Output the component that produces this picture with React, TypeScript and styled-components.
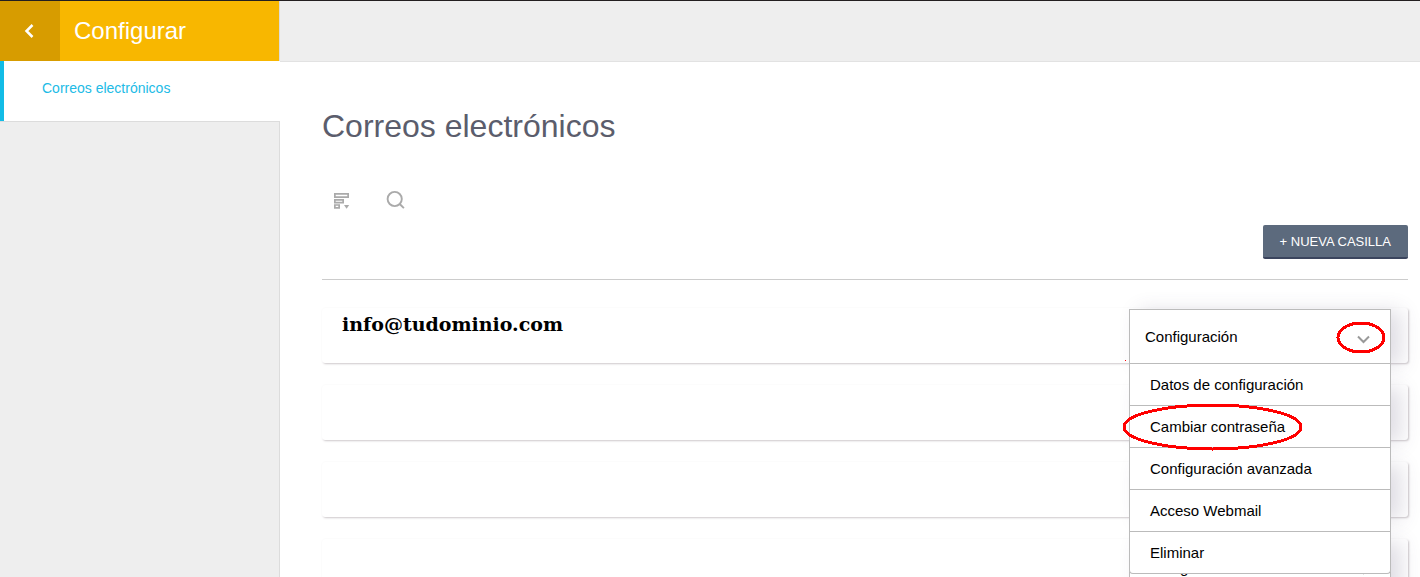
import React from 'react';
import styled, { createGlobalStyle, css } from 'styled-components';

const GlobalStyle = createGlobalStyle`
  *, *::before, *::after { box-sizing: border-box; }
  body {
    margin: 0;
    background: #fff;
    color: #000;
    font-family: "Liberation Sans", Arial, sans-serif;
    font-size: 15px;
  }
  button { font: inherit; color: inherit; cursor: pointer; }
`;

const Page = styled.div`
  display: flex;
  height: 100vh;
  overflow: hidden;
  border-top: 1px solid #231f20;
`;

const Sidebar = styled.aside`
  flex: 0 0 280px;
  background: #eee;
  border-right: 1px solid #dcdcdc;
`;

const SidebarHeader = styled.div`
  display: flex;
  height: 60px;
  background: #f8b700;
`;

const BackButton = styled.button`
  display: flex;
  align-items: center;
  justify-content: center;
  width: 60px;
  padding: 0 2px 0 0;
  border: 0;
  background: #d79c00;
`;

const SidebarTitle = styled.div`
  padding-left: 14px;
  color: #fff;
  font-size: 24px;
  line-height: 60px;
`;

const SidebarNav = styled.nav`
  margin-right: -1px;
  border-bottom: 1px solid #dcdcdc;
`;

const SidebarLink = styled.a`
  display: block;
  height: 60px;
  padding-left: 38px;
  border-left: 4px solid #12bce6;
  background: #fff;
  color: #21bbe6;
  font-size: 14px;
  line-height: 55px;
  text-decoration: none;
`;

const Main = styled.div`
  flex: 1;
  min-width: 0;
`;

const TopBar = styled.header`
  height: 61px;
  background: #eee;
  border-bottom: 1px solid #e2e2e2;
`;

const Content = styled.main`
  padding: 44px 12px 0 42px;
`;

const Heading = styled.h1`
  margin: 0;
  color: #5b5d6c;
  font-size: 32px;
  font-weight: 400;
  line-height: 40px;
`;

const Tools = styled.div`
  display: flex;
  gap: 30px;
  margin-top: 42px;
  padding-left: 8px;
`;

const IconButton = styled.button`
  width: 24px;
  height: 24px;
  padding: 0;
  border: 0;
  background: none;
  svg { display: block; }
`;

const Actions = styled.div`
  display: flex;
  justify-content: flex-end;
  padding: 13px 0 20px;
  border-bottom: 1px solid #ccc;
`;

const NewButton = styled.button`
  height: 34px;
  padding: 0 17px;
  border: 0;
  border-bottom: 2px solid #3b455e;
  border-radius: 2px;
  background: #5c6a7d;
  color: #fff;
  font-size: 13px;
`;

const MailboxList = styled.ul`
  display: flex;
  flex-direction: column;
  gap: 22px;
  margin: 28px 0 0;
  padding: 0;
  list-style: none;
`;

const MailboxRow = styled.li`
  display: flex;
  align-items: flex-start;
  justify-content: space-between;
  height: 55px;
  padding: 1px 17px 0 20px;
  border-radius: 3px;
  box-shadow: 1px 1px 2px rgba(60, 40, 50, 0.25);
`;

const Address = styled.span`
  font-family: "DejaVu Serif", serif;
  font-size: 19px;
  font-weight: 700;
  line-height: 30px;
`;

const Dropdown = styled.div<{ $open?: boolean }>`
  position: relative;
  width: 262px;
  margin-left: auto;
  box-shadow: 10px 2px 20px rgba(80, 65, 105, 0.18);
  ${({ $open }) => $open && css`z-index: 2;`}
`;

const DropdownToggle = styled.button`
  display: flex;
  align-items: center;
  justify-content: space-between;
  width: 100%;
  height: 55px;
  padding: 0 20px 0 15px;
  border: 1px solid #bbb;
  background: #fff;
  svg { margin: 6px 0 0 auto; }
`;

const Menu = styled.ul`
  position: absolute;
  top: 100%;
  left: 0;
  right: 0;
  margin: 0;
  padding: 0;
  border: 1px solid #bbb;
  border-top: 0;
  border-radius: 0 0 4px 4px;
  background: #fff;
  list-style: none;
`;

const MenuItem = styled.li`
  position: relative;
  & + & { border-top: 1px solid #bbb; }
`;

const MenuButton = styled.button`
  display: block;
  width: 100%;
  height: 41px;
  padding: 0 20px;
  border: 0;
  background: none;
  text-align: left;
`;

const Highlight = styled.svg<{ $top: number; $left: number }>`
  position: absolute;
  z-index: 1;
  top: ${({ $top }) => $top}px;
  left: ${({ $left }) => $left}px;
  fill: none;
  stroke: #f00;
  stroke-width: 3;
  shape-rendering: crispEdges;
  pointer-events: none;
`;

const options = [
  'Datos de configuración',
  'Cambiar contraseña',
  'Configuración avanzada',
  'Acceso Webmail',
  'Eliminar',
];

const mailboxes = [
  { id: 1, address: 'info@tudominio.com', open: true, label: 'Configuración' },
  { id: 2, address: '', open: false, label: '' },
  { id: 3, address: '', open: false, label: '' },
  { id: 4, address: '', open: false, label: 'Configuración' },
];

const Chevron = () => (
  <svg width="13" height="9" viewBox="0 0 13 9" fill="none" stroke="#999" strokeWidth="2">
    <path d="M1 1.5 6.5 7 12 1.5" />
  </svg>
);

function ConfigDropdown({ open, label }: { open: boolean; label: string }) {
  return (
    <Dropdown $open={open}>
      <DropdownToggle type="button" aria-expanded={open} aria-label="Configuración">
        {label}
        <Chevron />
      </DropdownToggle>
      {open && (
        <>
          <Highlight $top={12} $left={207} width="50" height="33">
            <ellipse cx="25" cy="16.5" rx="23" ry="14.5" />
          </Highlight>
          <Highlight $top={51} $left={-4} width="1" height="1">
            <path d="M0 .5h1" />
          </Highlight>
          <Menu>
            {options.map((option) => (
              <MenuItem key={option}>
                <MenuButton type="button">{option}</MenuButton>
                {option === 'Cambiar contraseña' && (
                  <Highlight $top={-3} $left={-8} width="181" height="48">
                    <ellipse cx="90.5" cy="24" rx="88.5" ry="22" />
                  </Highlight>
                )}
              </MenuItem>
            ))}
          </Menu>
        </>
      )}
    </Dropdown>
  );
}

export default function App() {
  return (
    <>
      <GlobalStyle />
      <Page>
        <Sidebar>
          <SidebarHeader>
            <BackButton type="button" aria-label="Volver">
              <svg width="10" height="14" viewBox="0 0 10 14" fill="none" stroke="#fff" strokeWidth="2.5">
                <path d="M8.500 1 2.500 7l6 6" />
              </svg>
            </BackButton>
            <SidebarTitle>Configurar</SidebarTitle>
          </SidebarHeader>
          <SidebarNav>
            <SidebarLink href="#correos" aria-current="page">Correos electrónicos</SidebarLink>
          </SidebarNav>
        </Sidebar>
        <Main>
          <TopBar />
          <Content>
            <Heading>Correos electrónicos</Heading>
            <Tools>
              <IconButton type="button" aria-label="Ordenar">
                <svg width="24" height="24" fill="none" stroke="#aaa" strokeWidth="1.7">
                  <path d="M4.850 5.850h13.300v3.300H4.850zM4.850 11.850h8.300v2.700h-8.300zM4.850 17h4.300v2.900h-4.300z" />
                  <path d="M14 17h5.200l-2.600 3.800z" fill="#aaa" stroke="none" />
                </svg>
              </IconButton>
              <IconButton type="button" aria-label="Buscar">
                <svg width="24" height="24" fill="none" stroke="#aaa" strokeWidth="1.9">
                  <circle cx="10.7" cy="11" r="7.1" />
                  <path d="m15.700 16 4.200 4.200" />
                </svg>
              </IconButton>
            </Tools>
            <Actions>
              <NewButton type="button">+ NUEVA CASILLA</NewButton>
            </Actions>
            <MailboxList>
              {mailboxes.map(({ id, address, open, label }) => (
                <MailboxRow key={id}>
                  {address && <Address>{address}</Address>}
                  <ConfigDropdown open={open} label={label} />
                </MailboxRow>
              ))}
            </MailboxList>
          </Content>
        </Main>
      </Page>
    </>
  );
}
